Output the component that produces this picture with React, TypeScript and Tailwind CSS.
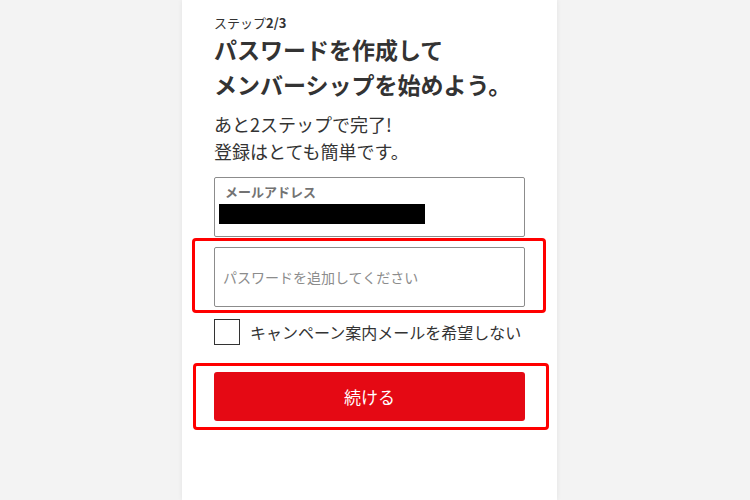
const jp = { fontFamily: '"Noto Sans CJK JP", "Noto Sans", sans-serif' };

export default function App() {
  return (
    <div className="flex h-[500px] w-[750px] justify-center overflow-hidden bg-[#f3f3f3] pr-[11px]" style={jp}>
      <div className="h-full w-[375px] bg-white px-[32px] pt-[14px] text-[#333] shadow-[0_0_5px_rgba(0,0,0,0.07)]">
        <div className="text-[13px] leading-[18px]">
          ステップ<span className="font-bold">2/3</span>
        </div>
        <h1 className="text-[23px] font-bold leading-[34.5px]">
          パスワードを作成して
          <br />
          メンバーシップを始めよう。
        </h1>
        <p className="mt-[10px] text-[18px] leading-[27px]">
          あと2ステップで完了!
          <br />
          登録はとても簡単です。
        </p>

        <div className="mt-[12px] h-[60px] rounded-[2px] border border-[#8c8c8c] pl-[4px] pt-[6px]">
          <div className="ml-[6px] text-[13px] font-bold leading-[16px] text-[#737373]">メールアドレス</div>
          <div className="mt-[4px] h-[20px] w-[206px] bg-black" />
        </div>

        <div className="relative mt-[10px]">
          <input
            type="password"
            placeholder="パスワードを追加してください"
            className="block h-[60px] w-full rounded-[2px] border border-[#8c8c8c] pl-[8px] text-[14px] text-[#333] outline-none placeholder:text-[#8c8c8c]"
            style={jp}
          />
          <div className="pointer-events-none absolute -left-[22px] -right-[21px] -top-[9px] -bottom-[6px] rounded-[4px] border-[3px] border-[#ff0000]" />
        </div>

        <label className="mt-[12px] flex items-center gap-[10px]">
          <span className="h-[26px] w-[26px] shrink-0 border border-[#333] bg-white" />
          <span className="text-[16px] leading-[26px]">キャンペーン案内メールを希望しない</span>
        </label>

        <div className="relative mt-[27px]">
          <button className="flex h-[49px] w-full items-center justify-center rounded-[3px] bg-[#e50914] text-[17px] text-white" style={jp}>
            続ける
          </button>
          <div className="pointer-events-none absolute -left-[21px] -right-[24px] -top-[9px] -bottom-[9px] rounded-[4px] border-[3px] border-[#ff0000]" />
        </div>
      </div>
    </div>
  );
}
